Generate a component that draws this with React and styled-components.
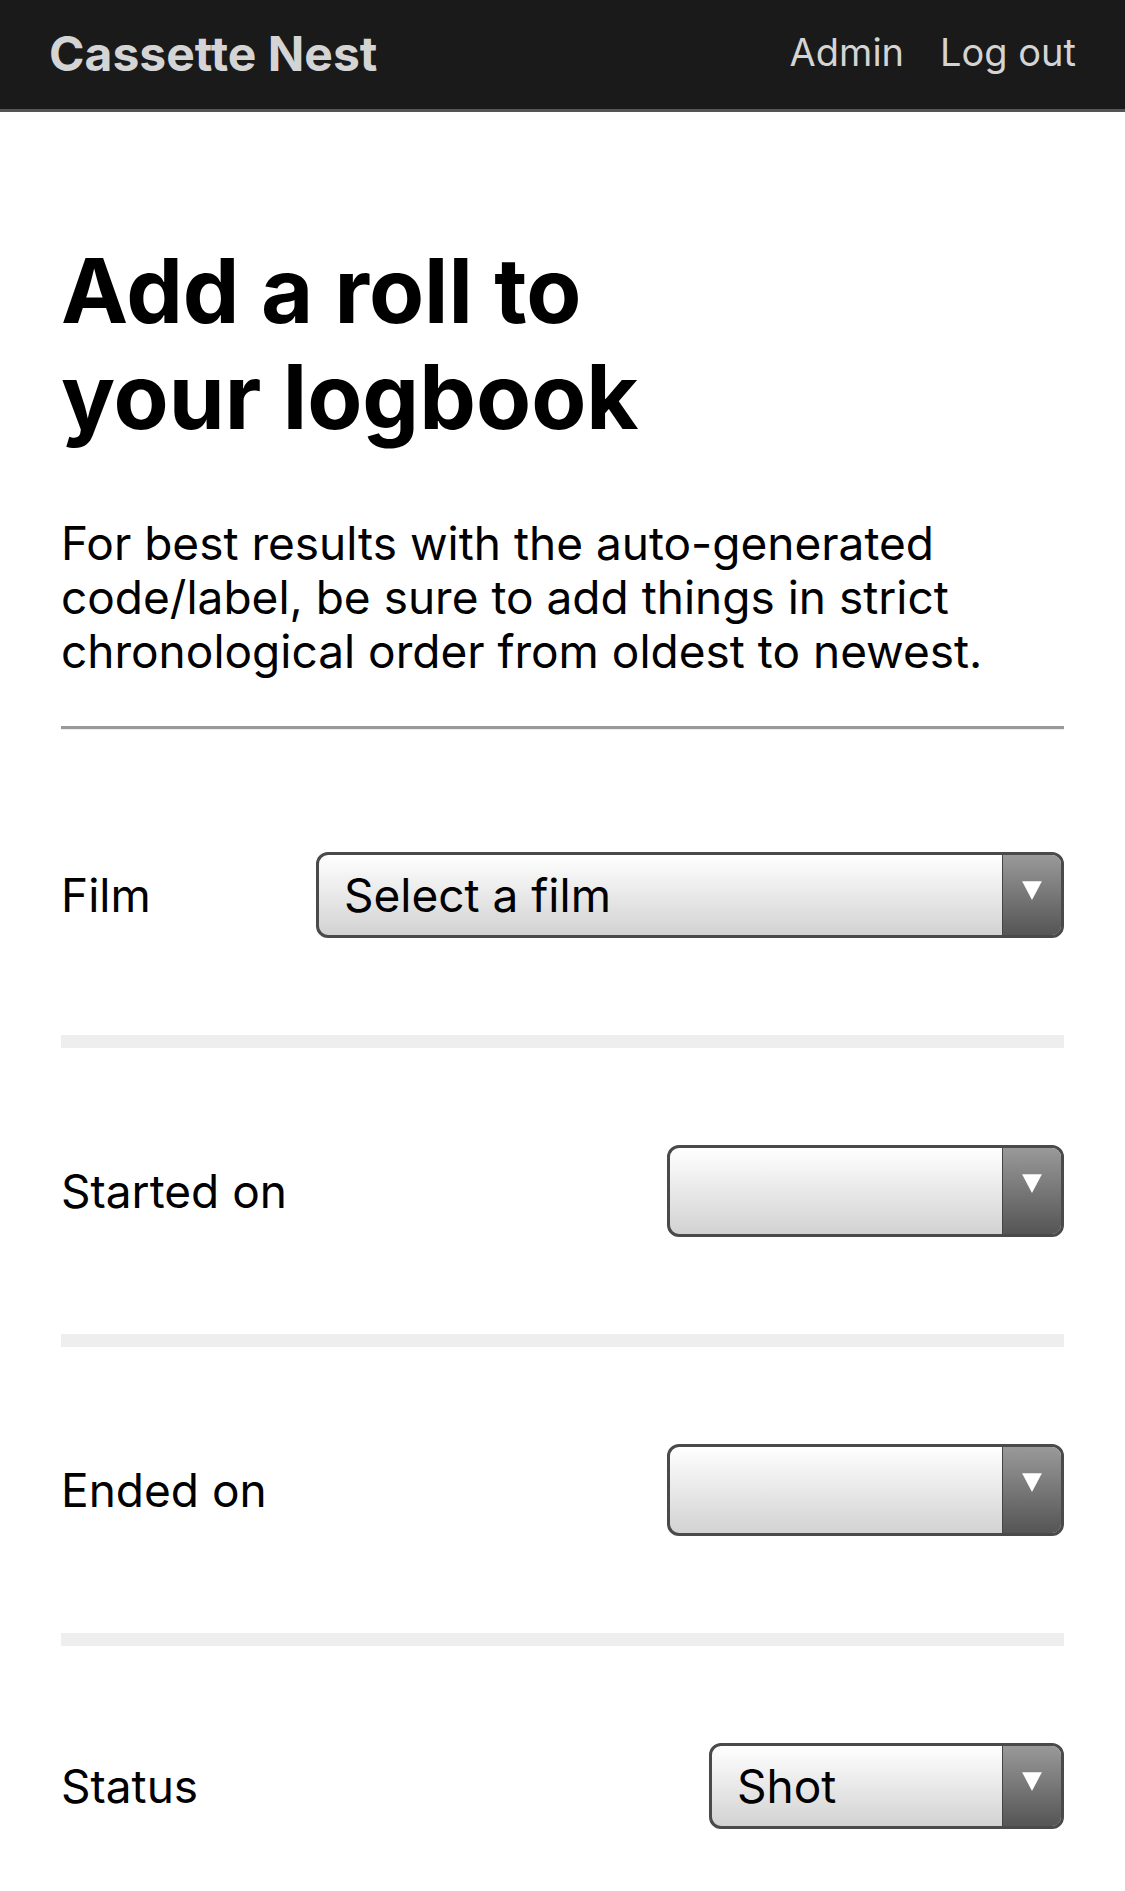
import React from 'react'
import styled, { createGlobalStyle } from 'styled-components'

const GlobalStyle = createGlobalStyle`
  * { box-sizing: border-box; }
  body {
    margin: 0;
    background: #fff;
    font-family: Inter, "Noto Sans", "Liberation Sans", sans-serif;
    color: #000;
  }
`

const fields = [
  { label: 'Film', value: 'Select a film', width: 748, height: 86 },
  { label: 'Started on', value: '', width: 397, height: 92 },
  { label: 'Ended on', value: '', width: 397, height: 92 },
  { label: 'Status', value: 'Shot', width: 355, height: 86 },
]

function Dropdown({ value, width, height }) {
  return (
    <Select $width={width} $height={height}>
      <SelectValue>{value}</SelectValue>
      <Arrow>
        <svg width="22" height="22" viewBox="0 0 20 20">
          <polygon points="1,2 19,2 10,19" fill="#fff" />
        </svg>
      </Arrow>
    </Select>
  )
}

export default function App() {
  return (
    <>
      <GlobalStyle />
      <Header>
        <Brand>Cassette Nest</Brand>
        <Nav>
          <NavLink>Admin</NavLink>
          <NavLink>Log out</NavLink>
        </Nav>
      </Header>
      <Main>
        <Title>Add a roll to<br />your logbook</Title>
        <Intro>
          For best results with the auto-generated code/label, be sure to add
          things in strict chronological order from oldest to newest.
        </Intro>
        <Rule />
        <Form>
          {fields.map((f, i) => (
            <Row key={f.label} $last={i === fields.length - 1}>
              <Label>{f.label}</Label>
              <Dropdown value={f.value} width={f.width} height={f.height} />
            </Row>
          ))}
        </Form>
      </Main>
    </>
  )
}

const Header = styled.header`
  height: 112px;
  background: #1a1a1a;
  border-bottom: 3px solid #555;
  display: flex;
  align-items: center;
  justify-content: space-between;
  padding: 0 49px 0 49px;
`

const Brand = styled.div`
  color: #d4d4d4;
  font-weight: 700;
  font-size: 48px;
  margin-top: -2px;
`

const Nav = styled.nav`
  display: flex;
  gap: 36px;
`

const NavLink = styled.a`
  color: #d4d4d4;
  font-size: 38px;
  font-weight: 400;
  margin-top: -6px;
`

const Main = styled.main`
  padding: 0 61px;
`

const Title = styled.h1`
  margin: 126px 0 0;
  font-size: 90px;
  line-height: 106px;
  font-weight: 700;
`

const Intro = styled.p`
  margin: 66px 0 0;
  font-size: 46px;
  line-height: 54px;
  max-width: 1003px;
`

const Rule = styled.hr`
  margin: 48px 0 0;
  border: 0;
  border-top: 3px solid #999;
  border-bottom: 1px solid #eee;
  height: 0;
`

const Form = styled.div`
  display: flex;
  flex-direction: column;
  margin-top: 25px;
`

const Row = styled.div`
  display: flex;
  align-items: center;
  justify-content: space-between;
  padding: 97px 0;
  border-bottom: ${p => (p.$last ? 'none' : '13px solid #eee')};
`

const Label = styled.label`
  font-size: 46px;
`

const Select = styled.div`
  width: ${p => p.$width}px;
  height: ${p => p.$height}px;
  display: flex;
  align-items: stretch;
  border: 3px solid #4a4a4a;
  border-radius: 12px;
  overflow: hidden;
  background: linear-gradient(#fff, #d2d2d2);
`

const SelectValue = styled.span`
  flex: 1;
  display: flex;
  align-items: center;
  padding-left: 25px;
  font-size: 46px;
  color: #000;
`

const Arrow = styled.span`
  width: 59px;
  display: flex;
  justify-content: center;
  padding-top: 24px;
  background: linear-gradient(#999, #555);
  border-left: 1px solid #444;
`
